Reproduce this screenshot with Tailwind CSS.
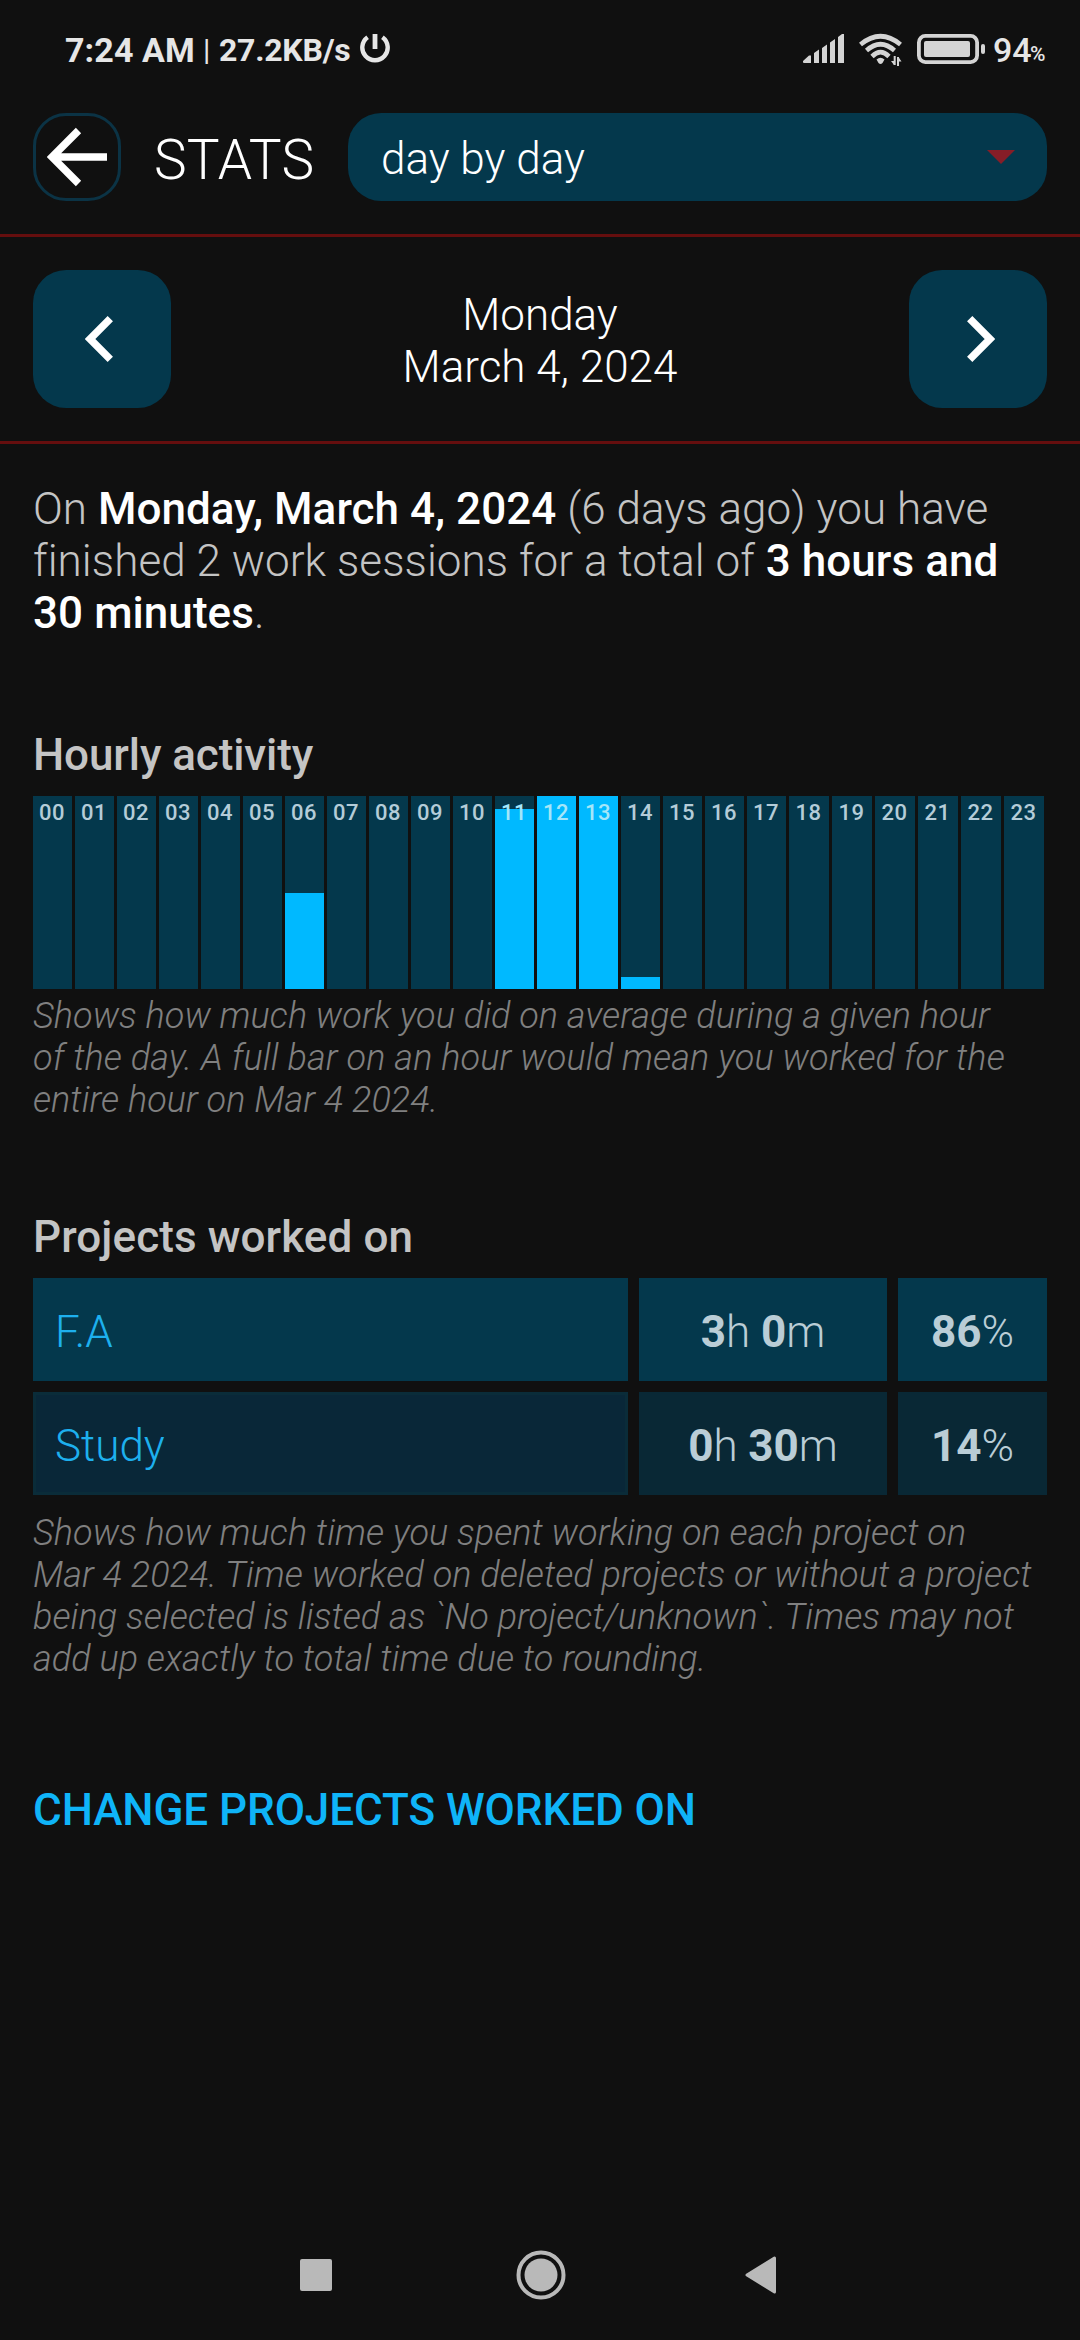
<!DOCTYPE html>
<html lang="en">
<head>
  <meta charset="UTF-8">
  <meta name="viewport" content="width=device-width, initial-scale=1.0">
  <title>Stats</title>
  <script src="https://cdn.jsdelivr.net/npm/@tailwindcss/browser@4"></script>
</head>
<body class="bg-[#101010] text-white font-['Roboto',sans-serif] font-light">
  <div class="w-[1080px] h-[2340px] flex flex-col overflow-hidden">

    <!-- Status bar -->
    <div class="h-[113px] shrink-0 flex justify-between pl-[65px] pr-[34px] pt-[30px] text-[#e6e6e6]">
      <div class="flex h-10 leading-10 font-bold whitespace-nowrap">
        <span class="w-[138px] text-[34px] tracking-[0.1px]">7:24 AM</span>
        <span class="w-[16px] text-[30px] font-normal">|</span>
        <span class="w-[139px] text-[32px] tracking-[-0.25px]">27.2KB/s</span>
        <svg class="mt-[3px] w-8 h-8" viewBox="0 0 32 32" fill="none" stroke="#e6e6e6" stroke-width="4.4">
          <path d="M9.6 4.2A12.7 12.7 0 1 0 24.4 4.2"/>
          <path d="M17 1v15" stroke-width="4.8"/>
        </svg>
      </div>
      <div class="flex h-10 leading-10 font-medium">
        <svg class="mt-[3px] mr-[15px] w-[41px] h-8" viewBox="0 0 41 32" fill="#d4d4d4">
          <path d="M0 29.5V28l6-5.500h2V30H1zM11 20l5-3.500V30h-5zM19 15l5-3.500V30h-5zM27 9.500L32 6v24h-5zM35 4l4-3h2v29h-6z"/>
        </svg>
        <svg class="mt-[3px] mr-[15px] w-[43px] h-[34px]" viewBox="0 0 43 34">
          <g fill="none" stroke="#d4d4d4" stroke-width="4.600">
            <path d="M1.500 11.500Q21.500-5 41.500 11.500"/>
            <path d="M7.500 17.500Q21.500 5 35.500 17.500"/>
            <path d="M13 23.500Q21.500 15 30 23.500"/>
          </g>
          <path d="M17.500 26.500Q21.500 23 25.500 26.500L23.500 30Q21.500 32 19.500 30z" fill="#d4d4d4"/>
          <path d="M35.700 23v9M39 33v-9" stroke="#d4d4d4" stroke-width="2"/>
          <path d="M32 28h3v4zM42.500 28.500h-3V24z" fill="#d4d4d4"/>
        </svg>
        <svg class="mt-[4px] mr-2 w-[68px] h-[30px]" viewBox="0 0 68 30">
          <rect x="1.900" y="1.900" width="58.200" height="26.200" rx="6.500" fill="none" stroke="#d4d4d4" stroke-width="3.800"/>
          <rect x="7" y="7" width="46" height="16" rx="2" fill="#d4d4d4"/>
          <rect x="64" y="10" width="4" height="10" rx="2" fill="#d4d4d4"/>
        </svg>
        <span class="w-[37px] text-[34px]">94</span>
        <span class="w-4 pt-1 text-[21px]">%</span>
      </div>
    </div>

    <!-- Title bar -->
    <header class="h-[124px] shrink-0 flex px-[33px] border-b-[3px] border-[#650e0e]">
      <button class="w-22 h-22 rounded-[33px] border-[3px] border-[#0b3345] flex items-center justify-center">
        <svg class="w-[60px] h-[60px]" viewBox="0 0 60 60" fill="none" stroke="#fff" stroke-width="7.500">
          <path d="M31.500 3.500L5 30L31.500 56.500M4.500 30H60"/>
        </svg>
      </button>
      <h1 class="w-[227px] h-22 pl-[33px] text-[55px] leading-[94px] tracking-[0.2px]">STATS</h1>
      <div class="w-[699px] h-22 flex items-center justify-between rounded-[33px] bg-[#04384c] pl-[33px] pr-8">
        <span class="pt-[3px] text-[44px] leading-[52px]">day by day</span>
        <svg class="w-7 h-[14px]" viewBox="0 0 28 14" fill="#861d27"><path d="M0 0h28L14 14z"/></svg>
      </div>
    </header>

    <!-- Day switcher -->
    <nav class="h-[207px] shrink-0 flex items-center justify-between px-[33px] border-b-[3px] border-[#650e0e]">
      <button class="w-[138px] h-[138px] pr-1.5 rounded-[33px] bg-[#04384c] flex items-center justify-center">
        <svg class="w-7 h-[46px]" viewBox="0 0 28 46" fill="none" stroke="#fff" stroke-width="7.500">
          <path d="M25.300 2.700L5 23L25.300 43.300"/>
        </svg>
      </button>
      <div class="pt-1 text-center text-[44px] leading-[52px]">Monday<br>March 4, 2024</div>
      <button class="w-[138px] h-[138px] pl-1.5 rounded-[33px] bg-[#04384c] flex items-center justify-center">
        <svg class="w-7 h-[46px]" viewBox="0 0 28 46" fill="none" stroke="#fff" stroke-width="7.500">
          <path d="M2.700 2.700L23 23L2.700 43.300"/>
        </svg>
      </button>
    </nav>

    <main class="flex-1 px-[33px] pt-[39px] text-[#c4c4c4]">
      <p class="text-[44px] leading-[52px] tracking-[0.06px] whitespace-nowrap">
        On <b class="font-medium text-white">Monday, March 4, 2024</b> (6 days ago) you have<br>
        finished 2 work sessions for a total of <b class="font-medium text-white">3 hours and<br>
        30 minutes</b>.
      </p>

      <h2 class="mt-[90px] h-[67px] text-[44px] leading-[52px] tracking-[-0.1px] font-medium">Hourly activity</h2>
      <div id="hours" class="flex gap-[3px] h-[193px]"></div>
      <p class="mt-1.5 text-[36px] leading-[42px] italic tracking-[0.06px] text-[#808080] whitespace-nowrap">
        Shows how much work you did on average during a given hour<br>
        <span class="tracking-[0.12px]">of the day. A full bar on an hour would mean you worked for the</span><br>
        entire hour on Mar 4 2024.
      </p>

      <h2 class="mt-[90px] h-[67px] text-[44px] leading-[52px] tracking-[0.1px] font-medium">Projects worked on</h2>
      <div class="grid grid-cols-[595px_248px_149px] gap-[11px] text-[44px] leading-[108px] text-center text-[#bacdd6]">
        <div class="h-[103px] pl-[22px] bg-[#04384c] text-left text-[#1db0ee]">F.A</div>
        <div class="h-[103px] bg-[#04384c]"><b class="font-bold">3</b>h <b class="font-bold">0</b>m</div>
        <div class="h-[103px] bg-[#04384c]"><b class="font-bold">86</b>%</div>
        <div class="h-[103px] pl-[19px] border-[3px] border-[#0a2c39] leading-[102px] bg-[#092738] text-left text-[#1db0ee]">Study</div>
        <div class="h-[103px] bg-[#092835]"><b class="font-bold">0</b>h <b class="font-bold">30</b>m</div>
        <div class="h-[103px] bg-[#092835]"><b class="font-bold">14</b>%</div>
      </div>
      <p class="mt-[17px] text-[36px] leading-[42px] italic tracking-[0.06px] text-[#808080] whitespace-nowrap">
        Shows how much time you spent working on each project on<br>
        Mar 4 2024. Time worked on deleted projects or without a project<br>
        being selected is listed as `No project/unknown`. Times may not<br>
        add up exactly to total time due to rounding.
      </p>

      <a href="#" class="block mt-[104px] text-[44px] leading-[52px] tracking-[-0.07px] font-medium text-[#0fb4f8] whitespace-nowrap">CHANGE PROJECTS WORKED ON</a>
    </main>

    <!-- System navigation -->
    <div class="h-[130px] shrink-0 flex justify-between items-center pl-[300px] pr-[304px]">
      <div class="w-8 h-8 rounded-[2px] bg-[#b9b9b9]"></div>
      <svg class="ml-1 w-[50px] h-[50px]" viewBox="0 0 50 50">
        <circle cx="25" cy="25" r="22.500" fill="none" stroke="#b9b9b9" stroke-width="4"/>
        <circle cx="25" cy="25" r="16.500" fill="#b9b9b9"/>
      </svg>
      <svg class="w-[31px] h-[38px]" viewBox="0 0 31 38">
        <path d="M2 19L29.500 2V36z" fill="#b9b9b9" stroke="#b9b9b9" stroke-width="3" stroke-linejoin="round"/>
      </svg>
    </div>
  </div>

  <script>
    // share of each hour worked, in percent
    const worked = { 6: 49.7, 11: 93.3, 12: 100, 13: 100, 14: 6.2 };
    const hours = document.getElementById('hours');
    for (let h = 0; h < 24; h++) {
      const col = document.createElement('div');
      col.className = 'relative h-full shrink-0 bg-[#04384c] ' + (h < 18 ? 'w-[39px]' : 'w-[40px]');
      col.innerHTML = `
        <div class="absolute inset-x-0 bottom-0 bg-[#00b9ff]" style="height: ${worked[h] || 0}%"></div>
        <div class="relative pt-1 pr-px text-center text-[22px] leading-[26px] tracking-[0.6px] font-medium ${worked[h] > 90 ? 'text-[#a5e6f8]' : 'text-[#b4ccd8]'}">${String(h).padStart(2, '0')}</div>
      `;
      hours.appendChild(col);
    }
  </script>
</body>
</html>
